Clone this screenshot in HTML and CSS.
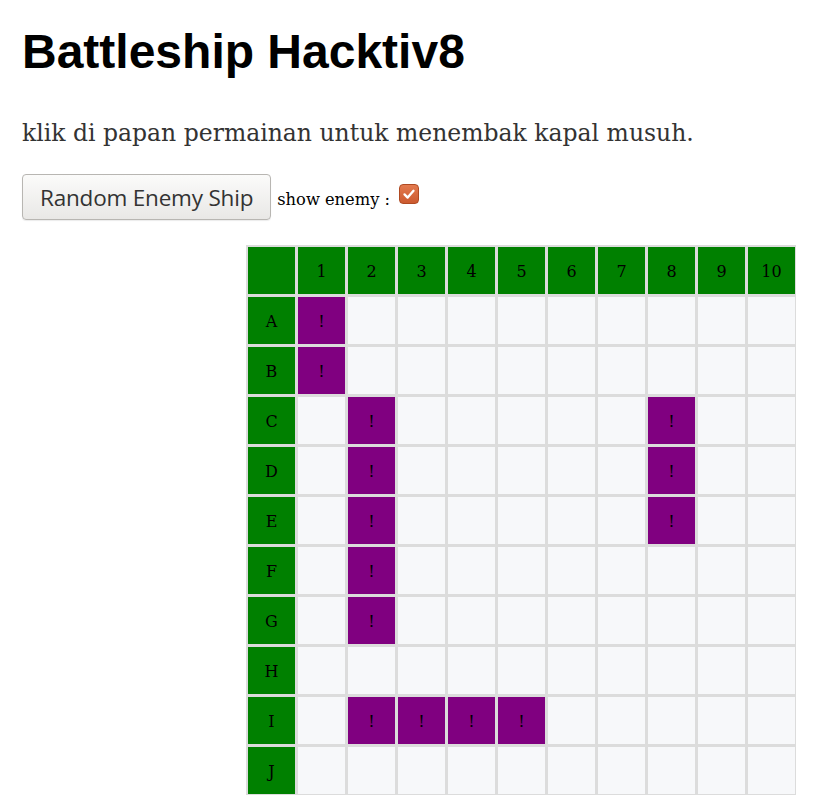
FILE: index.html
```html
<!DOCTYPE html>
<html>
<head>
<meta charset="utf-8">
<link rel="stylesheet" href="styles.css">
</head>
<body>
<h1 class="title">Battleship Hacktiv8</h1>
<p class="intro">klik di papan permainan untuk menembak kapal musuh.</p>
<div class="controls">
  <button class="btn">Random Enemy Ship</button>
  <span class="label">show enemy :</span>
  <span class="check"><svg viewBox="0 0 20 20" width="20" height="20"><path d="M5 10.5 L8.5 14 L15 6.5" fill="none" stroke="#fff" stroke-width="2.6" stroke-linecap="round" stroke-linejoin="round"/></svg></span>
</div>
<div class="board">
  <div class="cell head"></div><div class="cell head">1</div><div class="cell head">2</div><div class="cell head">3</div><div class="cell head">4</div><div class="cell head">5</div><div class="cell head">6</div><div class="cell head">7</div><div class="cell head">8</div><div class="cell head">9</div><div class="cell head">10</div>
  <div class="cell head">A</div><div class="cell ship">!</div><div class="cell"></div><div class="cell"></div><div class="cell"></div><div class="cell"></div><div class="cell"></div><div class="cell"></div><div class="cell"></div><div class="cell"></div><div class="cell"></div>
  <div class="cell head">B</div><div class="cell ship">!</div><div class="cell"></div><div class="cell"></div><div class="cell"></div><div class="cell"></div><div class="cell"></div><div class="cell"></div><div class="cell"></div><div class="cell"></div><div class="cell"></div>
  <div class="cell head">C</div><div class="cell"></div><div class="cell ship">!</div><div class="cell"></div><div class="cell"></div><div class="cell"></div><div class="cell"></div><div class="cell"></div><div class="cell ship">!</div><div class="cell"></div><div class="cell"></div>
  <div class="cell head">D</div><div class="cell"></div><div class="cell ship">!</div><div class="cell"></div><div class="cell"></div><div class="cell"></div><div class="cell"></div><div class="cell"></div><div class="cell ship">!</div><div class="cell"></div><div class="cell"></div>
  <div class="cell head">E</div><div class="cell"></div><div class="cell ship">!</div><div class="cell"></div><div class="cell"></div><div class="cell"></div><div class="cell"></div><div class="cell"></div><div class="cell ship">!</div><div class="cell"></div><div class="cell"></div>
  <div class="cell head">F</div><div class="cell"></div><div class="cell ship">!</div><div class="cell"></div><div class="cell"></div><div class="cell"></div><div class="cell"></div><div class="cell"></div><div class="cell"></div><div class="cell"></div><div class="cell"></div>
  <div class="cell head">G</div><div class="cell"></div><div class="cell ship">!</div><div class="cell"></div><div class="cell"></div><div class="cell"></div><div class="cell"></div><div class="cell"></div><div class="cell"></div><div class="cell"></div><div class="cell"></div>
  <div class="cell head">H</div><div class="cell"></div><div class="cell"></div><div class="cell"></div><div class="cell"></div><div class="cell"></div><div class="cell"></div><div class="cell"></div><div class="cell"></div><div class="cell"></div><div class="cell"></div>
  <div class="cell head">I</div><div class="cell"></div><div class="cell ship">!</div><div class="cell ship">!</div><div class="cell ship">!</div><div class="cell ship">!</div><div class="cell"></div><div class="cell"></div><div class="cell"></div><div class="cell"></div><div class="cell"></div>
  <div class="cell head">J</div><div class="cell"></div><div class="cell"></div><div class="cell"></div><div class="cell"></div><div class="cell"></div><div class="cell"></div><div class="cell"></div><div class="cell"></div><div class="cell"></div><div class="cell"></div>
</div>
</body>
</html>
```
FILE: styles.css
```css
html, body {
  margin: 0;
  background: #fff;
}
body {
  padding: 0 0 0 22px;
  font-family: "DejaVu Serif", serif;
}
.title {
  margin: 24px 0 0 0;
  font-family: "Liberation Sans", Arial, sans-serif;
  font-weight: bold;
  font-size: 48px;
  color: #000;
}
.intro {
  margin: 40px 0 0 0;
  font-family: "DejaVu Serif", serif;
  font-size: 23.5px;
  color: #333;
}
.controls {
  margin-top: 27px;
  display: flex;
  align-items: center;
  height: 46px;
}
.btn {
  height: 46px;
  padding: 0 17px;
  font-family: "Open Sans", "DejaVu Sans", sans-serif;
  font-size: 22.5px;
  letter-spacing: -0.2px;
  color: #333;
  background: linear-gradient(#fbfbfa, #e9e8e6);
  border: 1px solid #b8b6b2;
  border-radius: 4px;
  box-shadow: 0 1px 1px rgba(0,0,0,0.08);
}
.label {
  margin-left: 6px;
  margin-top: 4px;
  font-size: 16.3px;
  color: #000;
}
.check {
  margin-left: 9px;
  margin-top: -6px;
  width: 20px;
  height: 20px;
  border-radius: 4px;
  background: linear-gradient(#e37a4e, #cc5a2f);
  border: 1px solid #b04a22;
  box-sizing: border-box;
  display: flex;
  align-items: center;
  justify-content: center;
}
.check svg {
  width: 18px;
  height: 18px;
}
.board {
  margin: 25px 0 0 224px;
  display: grid;
  grid-template-columns: repeat(11, 47px);
  grid-auto-rows: 47px;
  gap: 3px;
  padding: 2px 1px 1px 2px;
  width: max-content;
  background: #dcdcdc;
}
.cell {
  background: #f7f8fa;
  display: flex;
  align-items: center;
  justify-content: center;
  padding-top: 2px;
  box-sizing: border-box;
  font-family: "DejaVu Serif", serif;
  font-size: 16px;
  color: #000;
}
.head {
  background: #008000;
}
.ship {
  background: #800080;
}
```
